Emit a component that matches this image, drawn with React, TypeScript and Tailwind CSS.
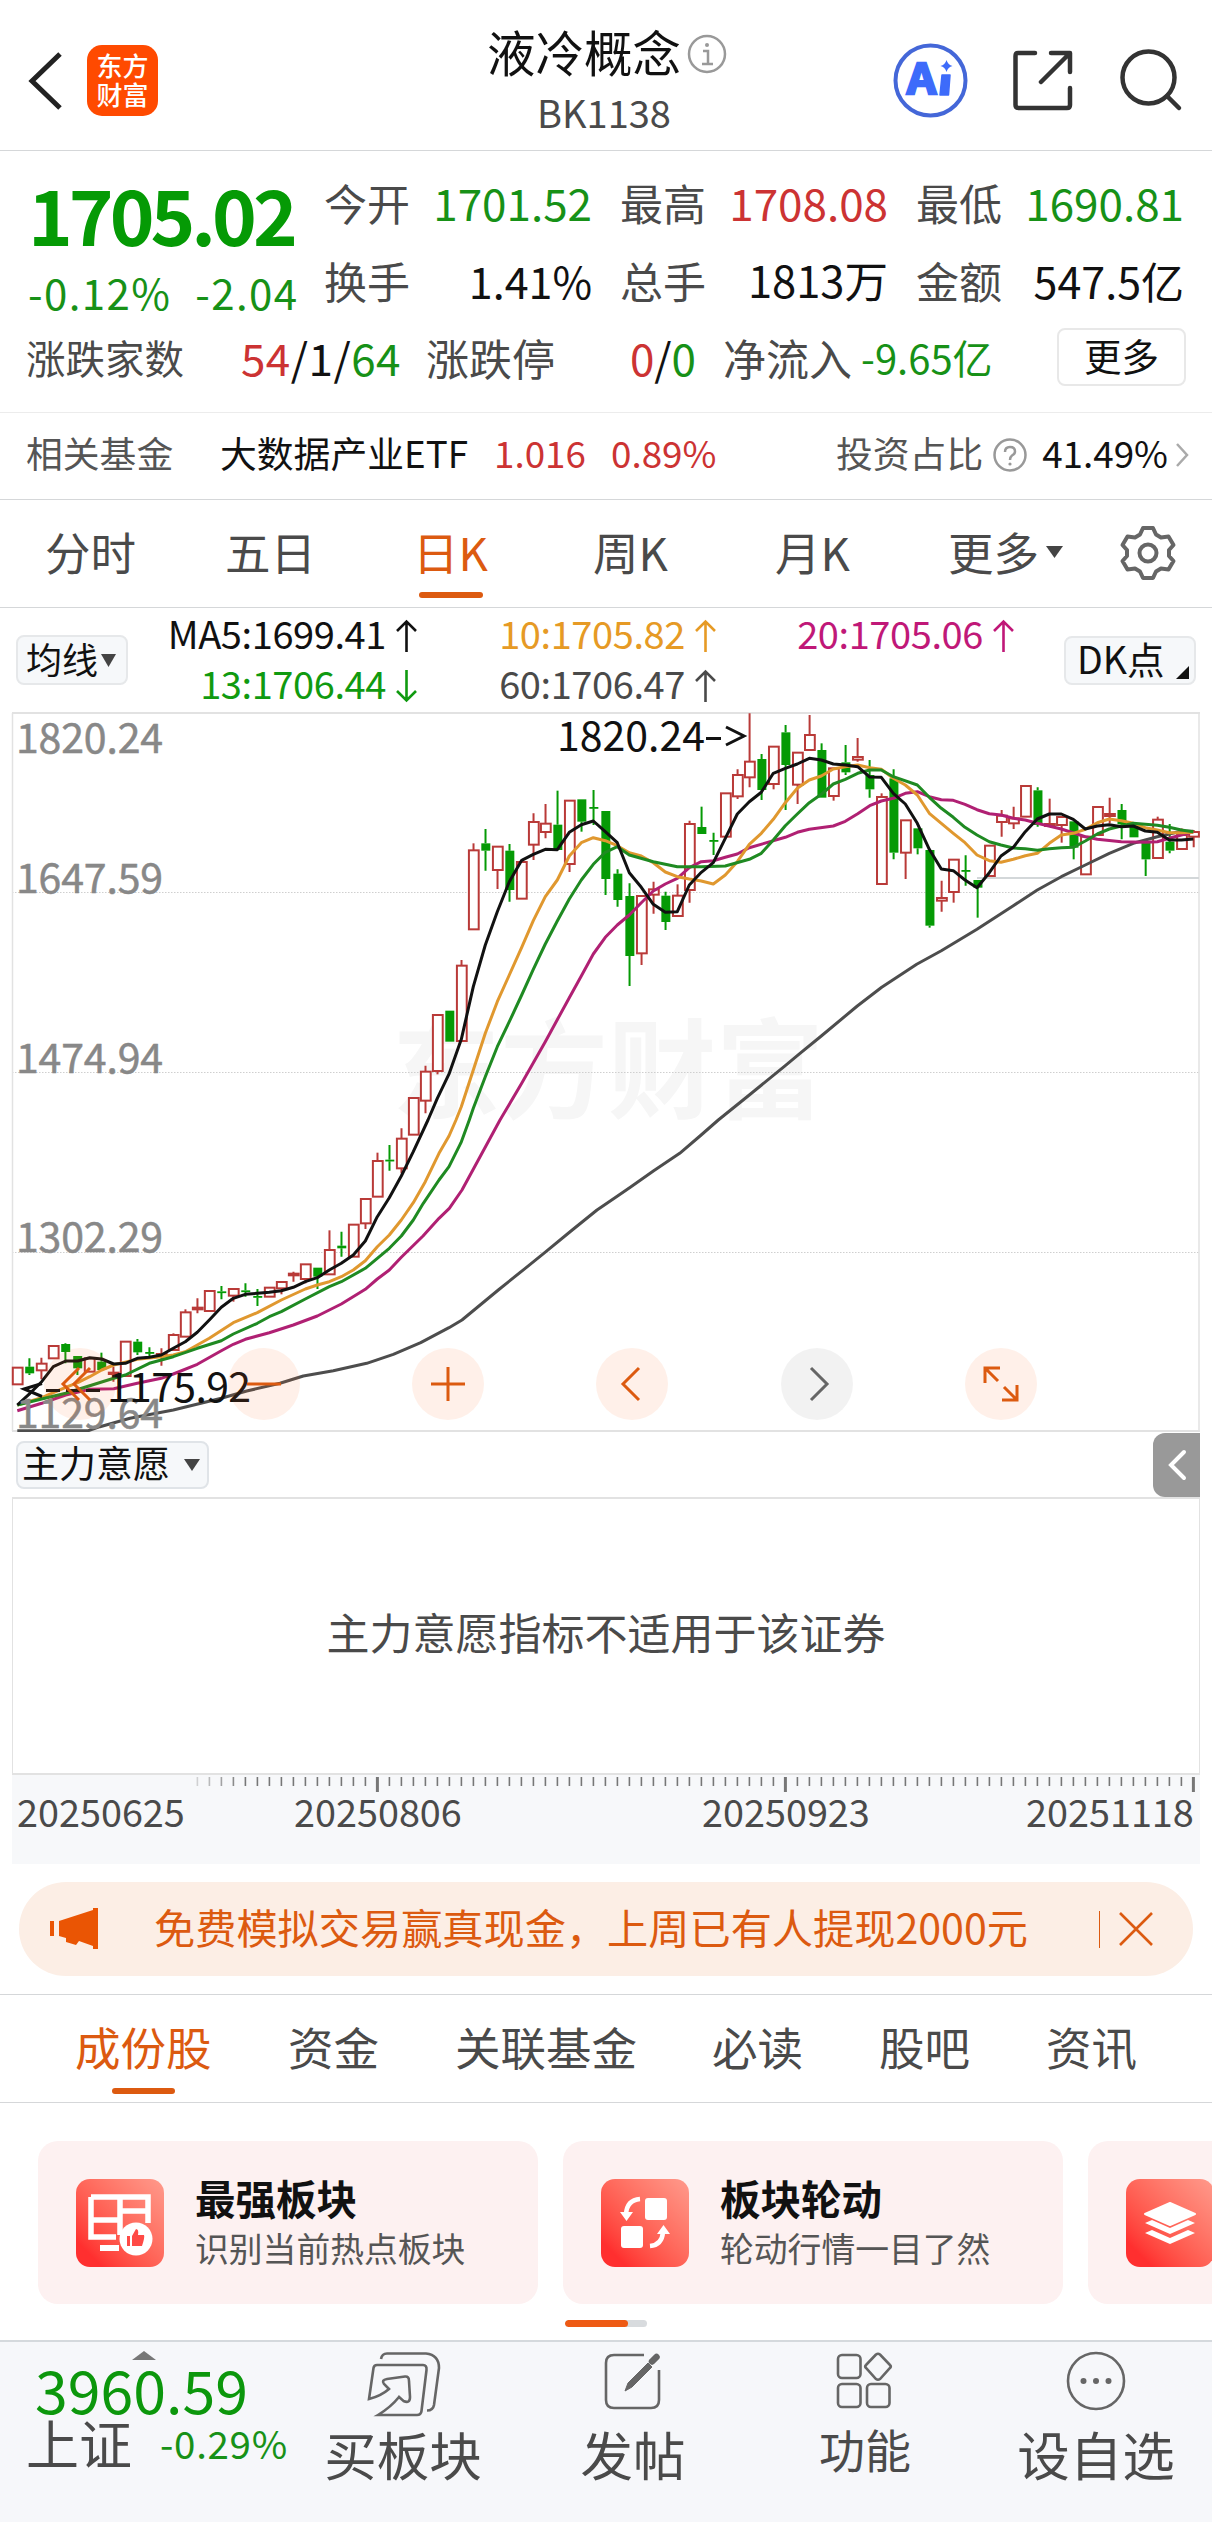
import type { ReactNode } from "react";

const GREEN = "#059a05";
const RED = "#b93a38";

/* One entry per trading day: "R|G bodyTop bodyBottom [wickTop wickBottom]", in thirds of a pixel above `base`. */
const CANDLES: { base: number; days: string[] }[] = [
  {
    base: 1100,
    days: [
      "R 803 853", "G 800 820 775 825", "R 791 811 773 838", "R 738 775", "G 732 756 730 790",
      "G 768 805 768 825", "R 775 815", "G 785 810 758 810", "R 818 822 800 845", "R 725 828",
      "G 725 757 717 765", "G 756 760 742 772", "R 762 767 745 797", "R 705 750 700 750", "R 637 710 628 710",
      "R 623 628 595 640", "R 573 633", "G 574 579 558 598", "R 567 587 567 605", "G 571 576 550 590",
      "G 588 593 567 618", "R 563 590", "R 546 565 546 583", "R 521 526 515 545", "R 493 537 493 550",
      "G 503 530 503 567", "R 450 523 391 523", "G 437 445 395 470", "R 374 470", "R 297 370 297 387",
      "R 183 290 158 290", "G 179 184 135 212", "R 116 205 85 220",
    ],
  },
  {
    base: 700,
    days: [
      "R 1194 1304", "R 1115 1202 1097 1240", "R 945 1113 945 1123", "G 932 1025", "R 797 1023 780 1023",
      "R 451 688 430 688", "G 430 452 387 512", "R 440 510 440 567", "G 452 570 432 605", "R 486 596",
      "R 366 434 340 480", "R 371 396 312 415", "G 374 450 272 450", "R 302 492 302 516", "G 298 365 298 395",
      "G 321 325 270 375", "G 333 537 333 585", "G 521 600 508 620", "G 588 768 550 858", "R 588 760 588 795",
      "R 568 584 545 641", "G 587 666 575 690", "R 587 648 553 648", "R 372 570 362 608", "G 381 402 320 402",
      "G 420 424 398 465", "R 280 410", "R 225 289 208 297", "R 185 232 40 262", "G 177 270 162 300",
      "R 140 252 140 268", "G 97 195 75 330", "R 158 254 158 312", "R 105 150 45 150", "G 150 293 130 293",
      "R 205 288 205 302", "G 187 217 135 225", "R 171 179 114 185", "G 225 268 180 293", "R 291 552 280 552",
      "G 235 458 208 478", "R 361 458 361 537", "G 385 445 385 463", "G 450 677 450 683", "R 594 602 542 635",
      "R 479 576 479 608", "G 510 514 466 557", "G 540 563 540 653", "R 437 528", "R 347 366 330 410",
      "R 355 370 320 387", "R 258 350", "G 271 375 262 380", "R 372 378 296 378", "R 351 375 351 428",
      "G 364 443 364 478", "R 410 523", "R 321 405", "R 342 348 293 370", "G 330 373 312 418",
      "G 375 412", "G 425 478 425 528", "R 359 474 350 474", "G 425 452 372 460", "R 405 447 385 447",
      "R 396 410 390 442",
    ],
  },
];

/* Moving averages as runs of points; each run has its own origin and a scale of three units per pixel. */
type Run = [number, number, string];
const AVERAGES: { color: string; runs: Run[] }[] = [
  {
    color: "#4d4d4d",
    runs: [
      [0, 1100, "52,992 265,992 300,980 390,955 520,930 664,895 740,873 840,850 910,828 1000,812 1100,790 1180,763 1262,728 1347,683 1386,660 1495,570 1572,508 1635,457 1713,393 1791,330 1845,293 1891,262 1961,212 2039,160 2100,108"],
      [400, 700, "955,1260 1048,1185 1156,1097"],
      [800, 700, "0,1060 64,1008 172,918 245,862 350,793 424,752 531,688 640,617 712,570 784,530 856,495 928,460 1000,430 1072,410 1144,394 1180,394"],
    ],
  },
  {
    color: "#b02073",
    runs: [
      [0, 1100, "52,932 125,910 197,885 269,868 341,866 412,850 484,835 520,822 592,793 664,752 700,733 736,718 808,698 880,675 952,648 1024,612 1096,568 1132,537 1168,510 1204,472 1269,408 1317,355 1348,325 1386,270 1435,180"],
      [400, 700, "300,1260 365,1150 436,1025 508,893 544,828 580,762 616,712 652,675 688,645 724,608 760,573 796,552 832,535 868,503 904,485 940,482 976,472 1012,462 1048,443 1156,412 1192,397"],
      [800, 700, "28,388 100,378 136,364 173,341 209,317 244,303 280,295 316,280 352,275 388,290 424,299 460,301 495,313 531,329 568,341 603,345 640,355 676,360 712,370 784,387 856,410 892,418 964,425 1036,427 1072,425 1108,415 1144,405 1180,395"],
    ],
  },
  {
    color: "#e0982f",
    runs: [
      [0, 1100, "52,915 125,893 197,862 233,848 269,830 305,810 341,795 376,787 412,778 484,770 520,765 556,755 628,715 700,668 772,638 844,600 916,567 952,555 988,545 1024,530 1060,510 1096,482 1132,440 1168,405 1204,360 1240,308 1276,245 1317,160 1347,108"],
      [400, 700, "168,1260 184,1220 220,1110 256,1000 292,905 328,825 365,742 400,662 436,590 472,540 508,468 544,428 580,413 616,422 652,437 688,458 724,468 760,488 796,516 832,530 868,537 904,543 940,552 976,525 1012,485 1048,433 1084,400 1120,358 1156,308 1192,265"],
      [800, 700, "28,240 64,228 100,207 136,200 173,195 209,203 244,208 280,235 316,255 352,285 388,340 424,370 460,400 495,428 531,465 568,482 603,487 640,478 676,467 712,460 748,430 784,405 820,400 856,388 892,368 928,357 964,362 1000,370 1036,383 1072,390 1108,398 1144,398 1180,397"],
    ],
  },
  {
    color: "#1f8a22",
    runs: [
      [0, 1100, "52,915 125,897 197,880 269,857 341,835 376,825 448,790 520,770 592,745 664,722 700,702 772,670 808,650 844,635 916,597 988,560 1024,545 1096,505 1132,475 1168,445 1204,408 1240,360 1270,310 1317,240 1347,200 1383,128"],
      [400, 700, "208,1260 220,1225 256,1130 292,1040 328,965 365,885 400,808 436,732 472,663 508,597 544,540 580,493 616,457 652,440 688,465 760,485 832,500 904,500 976,498 1048,478 1084,460 1120,420 1156,377 1192,342 1228,308"],
      [800, 700, "64,283 100,252 136,238 173,220 209,210 244,210 280,230 352,255 388,292 424,325 460,352 495,382 531,405 568,425 603,435 640,444 676,446 712,451 748,446 784,443 820,442 856,423 892,402 928,387 964,378 1000,370 1072,376 1108,382 1144,390 1180,395"],
    ],
  },
  {
    color: "#111111",
    runs: [
      [0, 1100, "52,915 90,880 125,845 160,800 197,783 233,783 269,773 305,777 341,792 376,790 412,775 448,772 484,765 520,745 556,725 592,697 628,660 664,622 700,595 736,583 772,580 808,577 844,572 880,562 916,545 952,533 988,510 1024,490 1060,465 1096,423 1132,350 1168,293 1204,228 1240,155"],
      [400, 700, "84,1260 112,1195 148,1120 184,1018 220,860 256,735 292,635 328,545 365,481 400,463 436,448 472,449 508,397 544,374 580,363 616,395 652,428 688,518 724,562 760,613 796,637 832,635 868,555 904,517 940,488 976,415 1012,342 1048,305 1084,277 1120,220 1156,205 1192,192"],
      [800, 700, "28,175 64,180 100,192 136,195 173,200 209,231 244,232 280,280 316,312 352,370 388,448 424,507 460,512 495,540 531,563 568,518 603,468 640,442 676,395 712,357 748,342 784,342 820,358 856,387 892,378 928,374 964,380 1000,378 1036,393 1072,397 1108,420 1144,420 1180,417"],
    ],
  },
];

const toPoints = (runs: Run[]) =>
  runs
    .flatMap(([ox, oy, pts]) =>
      pts.split(" ").map((p) => {
        const [x, y] = p.split(",").map(Number);
        return `${(ox + x / 3).toFixed(1)},${(oy + y / 3).toFixed(1)}`;
      }),
    )
    .join(" ");

function Candles() {
  let day = -1;
  return (
    <g>
      {CANDLES.flatMap(({ base, days }) =>
        days.map((entry) => {
          day += 1;
          const [kind, ...nums] = entry.split(" ");
          const [t, b, hi = t, lo = b] = nums.map((n) => base + Number(n) / 3);
          const top = t as number;
          const bottom = b as number;
          const x = 17.4 + 12.003 * day;
          const color = kind === "R" ? RED : GREEN;
          return (
            <g key={day}>
              <path d={`M${x} ${hi}V${top}M${x} ${bottom}V${lo}`} stroke={color} strokeWidth={2} />
              {kind === "R" ? (
                <rect x={x - 4.6} y={top} width={9.8} height={Math.max(bottom - top, 0.5)} fill="#fff" stroke={color} strokeWidth={2} />
              ) : (
                <rect x={x - 4.2} y={top} width={9} height={Math.max(bottom - top, 1.8)} fill={color} />
              )}
            </g>
          );
        }),
      )}
    </g>
  );
}

function KLineChart() {
  return (
    <svg className="block h-[720px] w-[1212px]" viewBox="0 712 1212 720" fill="none">
      <text x="392" y="1110" fontSize="108" fontWeight="700" fill="#f6f6f6">东方财富</text>
      <g stroke="#cfcfcf" strokeWidth="1" strokeDasharray="1.5 1.5">
        <path d="M12 892.5H1199M12 1072.5H1199M12 1252.5H1199" />
      </g>
      <path d="M12.5 713V1431M1199 713V1431" stroke="#e2e2e2" strokeWidth="1.5" />
      <path d="M12 713H1200M12 1431H1200" stroke="#e2e2e2" strokeWidth="2" />
      <path d="M977 878H1199" stroke="#d3d7d9" strokeWidth="2" />
      <Candles />
      {AVERAGES.map((a) => (
        <polyline key={a.color} points={toPoints(a.runs)} fill="none" stroke={a.color} strokeWidth="3" strokeLinejoin="round" />
      ))}
      <g fill="#888" stroke="#888" strokeWidth="0.5" fontSize="41">
        <text x="16" y="753" textLength="147">1820.24</text>
        <text x="16" y="893" textLength="147">1647.59</text>
        <text x="16" y="1073" textLength="147">1474.94</text>
        <text x="16" y="1252" textLength="147">1302.29</text>
        <text x="16" y="1428" textLength="147">1129.64</text>
      </g>
      <g fill="#111" fontSize="41">
        <text x="557" y="751" textLength="148">1820.24</text>
        <path d="M706 738.500H721M726 727L744 736L726 745" fill="none" stroke="#111" strokeWidth="3" />
        <text x="107" y="1402" textLength="144">1175.92</text>
        <path d="M42 1383.500L24 1389L42 1396.500M46 1390.500H60M66 1390.500H80M86 1390.500H100" fill="none" stroke="#111" strokeWidth="3" />
      </g>
    </svg>
  );
}

function ChartButton({ children, muted }: { children: ReactNode; muted?: boolean }) {
  return (
    <button className={`flex size-[72px] items-center justify-center rounded-full ${muted ? "bg-black/5" : "bg-[#ff6a20]/10"}`}>
      <svg className="size-[48px]" viewBox="-24 -24 48 48" fill="none" stroke={muted ? "#666" : "#dc5a10"} strokeWidth="3">
        {children}
      </svg>
    </button>
  );
}

function Stat({ label, value, tone }: { label: string; value: string; tone: string }) {
  return (
    <div className="flex w-[268px] items-center justify-between">
      <span className="text-[#4a4a4a]">{label}</span>
      <span className={tone}>{value}</span>
    </div>
  );
}

function Arrow({ down }: { down?: boolean }) {
  return (
    <svg className={`mt-[6px] ml-[10px] h-[34px] w-[21px] ${down ? "rotate-180" : ""}`} viewBox="0 0 21 34" fill="none" stroke="currentColor" strokeWidth="2.6">
      <path d="M10.500 33V3M1 12L10.500 2.500L20 12" />
    </svg>
  );
}

function Average({ text, tone, down }: { text: string; tone: string; down?: boolean }) {
  return (
    <div className={`flex h-[50px] items-center justify-end whitespace-nowrap ${tone}`}>
      {text}
      <Arrow down={down} />
    </div>
  );
}

function FeatureCard({ title, note, children }: { title?: string; note?: string; children: ReactNode }) {
  return (
    <div className="flex h-[163px] w-[500px] shrink-0 items-center rounded-[20px] bg-[#fdf1f1] pl-[38px]">
      <div className="size-[88px] shrink-0 rounded-[14px] bg-linear-to-tr from-[#ff2f2f] from-15% to-[#ff9a8c]">
        <svg viewBox="0 0 88 88" className="size-full" fill="none">{children}</svg>
      </div>
      <div className="ml-[31px] whitespace-nowrap">
        <div className="text-[40.500px] leading-[50px] font-bold text-[#111]">{title}</div>
        <div className="text-[33.800px] leading-[50px] text-[#555]">{note}</div>
      </div>
    </div>
  );
}

const ticks = Array.from({ length: 84 }, (_, i) => 197.4 + i * 12);

export default function App() {
  return (
    <div className="relative w-[1212px] overflow-hidden bg-white leading-none text-[#111] [font-family:'Noto_Sans_CJK_SC',sans-serif]">
      {/* Title bar */}
      <header className="flex h-[151px] items-start border-b border-[#d5d7d9]">
        <svg className="mt-[52px] ml-[26px] h-[58px] w-[38px] shrink-0" viewBox="0 0 38 58" fill="none" stroke="#222" strokeWidth="5">
          <path d="M34 2L6 29L34 56" />
        </svg>
        <div className="mt-[45px] ml-[23px] flex size-[71px] shrink-0 flex-col items-center justify-center rounded-[15px] bg-[#ff4a00] pb-[3px] text-[26px] leading-[29px] font-medium text-white">
          <span>东方</span>
          <span>财富</span>
        </div>
        <div className="ml-[200px] flex w-[502px] shrink-0 flex-col items-center pt-[26px] pr-[10px]">
          <div className="ml-[6px] flex items-center text-[48.500px] leading-[50px]">
            液冷概念
            <svg className="mt-[5px] ml-[6px] size-[40px]" viewBox="-20 -20 40 40" fill="none" stroke="#999" strokeWidth="2.500">
              <circle r="18" />
              <path d="M-4 -3H1V10M-5 10H6" />
              <circle cy="-9" r="2" fill="#999" stroke="none" />
            </svg>
          </div>
          <div className="mt-[17px] text-[38px] leading-[38px] text-[#4a4a4a]">BK1138</div>
        </div>
        <svg className="mt-[20px] h-[120px] w-[352px] shrink-0" viewBox="0 20 352 120" fill="none">
          <circle cx="70.500" cy="80.500" r="35" stroke="#4467d8" strokeWidth="4" />
          <text x="47" y="94" fontSize="42" fontWeight="700" fill="#3d6bfa" stroke="#3d6bfa" strokeWidth="2.500" textLength="29" lengthAdjust="spacingAndGlyphs">A</text>
          <path d="M82 75L90 75L88.500 95L80 95Z" fill="#3d6bfa" stroke="#3d6bfa" strokeWidth="1.500" strokeLinejoin="round" />
          <path d="M86.500 60Q88 65 92.500 66Q88 67 86.500 72Q85 67 80.500 66Q85 65 86.500 60Z" fill="#3d6bfa" />
          <g stroke="#333" strokeWidth="4.500" strokeLinecap="round" strokeLinejoin="round">
            <path d="M175 53H158Q155.500 53 155.500 56V105Q155.500 108 158.500 108H207Q210 108 210 105V88M191 53H210V72M209 54L181 82" />
            <circle cx="288.500" cy="77.500" r="26" />
            <path d="M307 96L319 108" />
          </g>
        </svg>
      </header>

      {/* Quote summary */}
      <section className="h-[262px] border-b border-[#ececec] text-[43px]">
        <div className="flex h-[167px] text-[#179117]">
          <div className="w-[324px] shrink-0 pt-[24px] pl-[28px] whitespace-nowrap">
            <div className="text-[76px] font-bold tracking-[-4px] text-[#059a05]">1705.02</div>
            <div className="mt-[20px] flex gap-[24px] text-[42px] tracking-[1.400px]">
              <span>-0.12%</span>
              <span>-2.04</span>
            </div>
          </div>
          <div className="grid auto-rows-[78px] grid-cols-[268px_268px_268px] gap-x-[28px] pt-[12px]">
            <Stat label="今开" value="1701.52" tone="text-[44px]" />
            <Stat label="最高" value="1708.08" tone="text-[44px] text-[#cc3333]" />
            <Stat label="最低" value="1690.81" tone="text-[44px]" />
            <Stat label="换手" value="1.41%" tone="text-[#111]" />
            <Stat label="总手" value="1813万" tone="text-[#111] text-[43.500px]" />
            <Stat label="金额" value="547.5亿" tone="text-[#111]" />
          </div>
        </div>
        <div className="flex h-[78px] items-center whitespace-nowrap">
          <div className="flex w-[374px] items-center justify-between pl-[26px]">
            <span className="text-[39.500px] text-[#4a4a4a]">涨跌家数</span>
            <span className="mr-[-27px] text-[44px] tracking-[0.500px]"><span className="text-[#cc3333]">54</span>/1/<span className="text-[#179117]">64</span></span>
          </div>
          <div className="ml-[52px] flex w-[270px] items-center justify-between">
            <span className="text-[#4a4a4a]">涨跌停</span>
            <span className="text-[44px]"><span className="text-[#cc3333]">0</span>/<span className="text-[#179117]">0</span></span>
          </div>
          <span className="ml-[27px] text-[#4a4a4a]">净流入</span>
          <span className="ml-[9px] text-[40px] text-[#179117]">-9.65亿</span>
          <button className="mr-[26px] ml-auto h-[58px] w-[129px] rounded-[8px] border-2 border-[#e8e8e8] pb-[4px] text-[37.500px]">更多</button>
        </div>
      </section>

      {/* Related fund */}
      <section className="flex h-[87px] items-center border-b border-[#d5d7d9] pb-[7px] text-[36.800px] whitespace-nowrap">
        <span className="ml-[26px] w-[194px] text-[#555]">相关基金</span>
        <span className="w-[274px]">大数据产业ETF</span>
        <span className="w-[117px] text-[#cc3333]">1.016</span>
        <span className="w-[225px] text-[#cc3333]">0.89%</span>
        <span className="text-[#555]">投资占比</span>
        <svg className="mt-[5px] ml-[9px] size-[36px]" viewBox="-18 -18 36 36" fill="none" stroke="#999" strokeWidth="2.500">
          <circle r="15.500" />
          <path d="M-5 -3Q-5 -8 0 -8Q5 -8 5 -3.500Q5 -1 2 .5Q0 2 0 5" />
          <circle cy="9" r="1.600" fill="#999" stroke="none" />
        </svg>
        <span className="ml-[14px]">41.49%</span>
        <svg className="mt-[4px] ml-[7px] h-[26px] w-[14px]" viewBox="0 0 14 26" fill="none" stroke="#aaa" strokeWidth="2.500"><path d="M2 2L12 13L2 24" /></svg>
      </section>

      {/* Period tabs */}
      <nav className="flex h-[108px] items-center border-b border-[#d5d7d9] pb-[4px] text-[45.500px] whitespace-nowrap text-[#4a4a4a]">
        <span className="ml-[45px] w-[180px]">分时</span>
        <span className="w-[188px]">五日</span>
        <span className="relative w-[180px] text-[#dc5a10]">
          日K
          <i className="absolute top-[63px] left-[6px] h-[6px] w-[64px] rounded-full bg-[#dc5a10]" />
        </span>
        <span className="w-[182px]">周K</span>
        <span className="w-[173px]">月K</span>
        <span>更多</span>
        <svg className="ml-[7px] h-[12px] w-[17px]" viewBox="0 0 17 12"><path d="M0 0H17L8.500 12Z" fill="#444" /></svg>
        <svg className="mt-[3px] ml-[56px] size-[58px]" viewBox="-29 -29 58 58" fill="none" stroke="#666" strokeWidth="4" strokeLinejoin="round">
          <path d="M-5 -25H5L8 -18.500L13 -15.500L20.500 -16.500L25.500 -8L21 -3V3L25.500 8L20.500 16.500L13 15.500L8 18.500L5 25H-5L-8 18.500L-13 15.500L-20.500 16.500L-25.500 8L-21 3V-3L-25.500 -8L-20.500 -16.500L-13 -15.500L-8 -18.500Z" />
          <circle r="8.500" />
        </svg>
      </nav>

      {/* Moving-average legend */}
      <section className="flex h-[104px] items-start">
        <button className="mt-[27px] ml-[16px] flex h-[50px] w-[112px] items-center rounded-[8px] border-2 border-[#e6e8ea] bg-[#f6f8fa] pb-[4px] pl-[8px] text-[36px]">
          均线
          <svg className="mt-[4px] ml-[3px] h-[13px] w-[15px]" viewBox="0 0 15 13"><path d="M0 0H15L7.500 13Z" fill="#444" /></svg>
        </button>
        <div className="grid h-[104px] w-[885px] auto-rows-[50px] grid-cols-[289px_299px_298px] text-[38px] tracking-[-0.400px]">
          <Average text="MA5:1699.41" tone="text-[#111]" />
          <Average text="10:1705.82" tone="text-[#e69a25]" />
          <Average text="20:1705.06" tone="text-[#c01878]" />
          <Average text="13:1706.44" tone="text-[#109a10]" down />
          <Average text="60:1706.47" tone="text-[#4a4a4a]" />
        </div>
        <button className="relative mt-[28px] ml-[51px] flex h-[49px] w-[132px] items-center rounded-[8px] border-2 border-[#e6e8ea] bg-[#f6f8fa] pb-[5px] pl-[11px] text-[37.500px]">
          DK点
          <svg className="absolute right-[5px] bottom-[4px] size-[13px]" viewBox="0 0 13 13"><path d="M13 0V13H0Z" fill="#111" /></svg>
        </button>
      </section>

      {/* Candlestick chart */}
      <section className="relative h-[720px]">
        <KLineChart />
        <div className="absolute top-[636px] left-[43.500px] flex gap-[112.300px]">
          <ChartButton><path d="M-1 -16L-17 0L-1 16M10 -16L-6 0L10 16" /></ChartButton>
          <ChartButton><path d="M-17 0H17" /></ChartButton>
          <ChartButton><path d="M-17 0H17M0 -17V17" /></ChartButton>
          <ChartButton><path d="M7 -16L-9 0L7 16" /></ChartButton>
          <ChartButton muted><path d="M-6 -16L10 0L-6 16" /></ChartButton>
          <ChartButton><path d="M-16 -1V-16H-1M-15 -15L-3 -3M16 1V16H1M15 15L3 3" /></ChartButton>
        </div>
      </section>

      {/* Indicator panel */}
      <section>
        <div className="flex h-[65px] items-center">
          <button className="ml-[16px] flex h-[48px] w-[193px] items-center rounded-[8px] border-2 border-[#e0e4e8] bg-[#f6f8fa] pb-[4px] pl-[4px] text-[37px] whitespace-nowrap">
            主力意愿
            <svg className="mt-[4px] ml-[14px] h-[12px] w-[16px]" viewBox="0 0 16 12"><path d="M0 0H16L8 12Z" fill="#444" /></svg>
          </button>
          <button className="mr-[12px] ml-auto flex h-[64px] w-[47px] items-center justify-center rounded-l-[12px] bg-[#999]">
            <svg className="h-[32px] w-[20px]" viewBox="0 0 20 32" fill="none" stroke="#fff" strokeWidth="4" strokeLinecap="round"><path d="M17 3L4 16L17 29" /></svg>
          </button>
        </div>
        <div className="ml-[12px] flex h-[278px] w-[1188px] items-center justify-center border-2 border-x-[1.500px] border-[#e2e2e2] pb-[10px] text-[43px] text-[#4a4a4a]">
          主力意愿指标不适用于该证券
        </div>
        <div className="ml-[12px] h-[89px] w-[1188px] bg-[#f7f8fa]">
          <svg className="block h-[17px] w-[1188px]" viewBox="12 0 1188 17">
            {ticks.map((x, i) => {
              const major = i === 15 || i === 49 || i === 83;
              return <path key={i} d={`M${x} 2V${major ? 17 : 11}`} stroke="#777" strokeWidth={major ? 3 : 1.6} opacity={i < 4 ? 0.3 + i * 0.18 : 1} />;
            })}
          </svg>
          <div className="flex text-[37.800px] leading-[38px] text-[#4a4a4a]">
            <span className="ml-[5px] w-[277px]">20250625</span>
            <span className="w-[408px]">20250806</span>
            <span className="w-[324px]">20250923</span>
            <span>20251118</span>
          </div>
        </div>
      </section>

      {/* Promotion banner */}
      <section className="h-[131px] border-b border-[#d5d7d9] pt-[18px]">
        <div className="mx-[19px] flex h-[94px] items-center rounded-full bg-[#fceee5] whitespace-nowrap text-[#dc5a10]">
          <svg className="ml-[31px] h-[42px] w-[48px]" viewBox="0 0 48 42" fill="#ea5504">
            <path d="M0 13H4V28H0ZM9 13L43 2V0H48V41H43V38L29 33L26 37L16 34V30L9 28Z" />
          </svg>
          <span className="ml-[56px] pb-[5px] text-[41.200px]">免费模拟交易赢真现金，上周已有人提现2000元</span>
          <i className="ml-auto h-[37px] w-px bg-[#dc5a10]" />
          <svg className="mr-[40px] ml-[19px] size-[34px]" viewBox="0 0 34 34" stroke="currentColor" strokeWidth="2.600"><path d="M1 1L33 33M33 1L1 33" /></svg>
        </div>
      </section>

      {/* Content tabs */}
      <nav className="flex h-[108px] items-center border-b border-[#d5d7d9] pb-[4px] text-[45.500px] whitespace-nowrap text-[#4a4a4a]">
        <span className="relative ml-[75px] w-[213px] text-[#dc5a10]">
          成份股
          <i className="absolute top-[64px] left-[37px] h-[6px] w-[63px] rounded-full bg-[#dc5a10]" />
        </span>
        <span className="w-[167px]">资金</span>
        <span className="w-[257px]">关联基金</span>
        <span className="w-[167px]">必读</span>
        <span className="w-[167px]">股吧</span>
        <span>资讯</span>
      </nav>

      {/* Feature cards */}
      <section className="h-[237px] overflow-hidden pt-[38px]">
        <div className="ml-[38px] flex gap-[25px]">
          <FeatureCard title="最强板块" note="识别当前热点板块">
            <path d="M15 18H72V44M15 18V58H40M15 41H44M44 18V56M44 32H72" stroke="#fff" strokeWidth="5.500" />
            <path d="M24 69H43" stroke="#fff" strokeWidth="6" />
            <circle cx="60" cy="60" r="16.500" fill="#fff" />
            <path d="M51 57H54V67H51ZM56 57L60 50Q63 50 62 56H68Q69 58 66 67H56Z" fill="#ff4a46" />
          </FeatureCard>
          <FeatureCard title="板块轮动" note="轮动行情一目了然">
            <rect x="44" y="19" width="22" height="22" rx="3" fill="#fff" />
            <rect x="20" y="47" width="22" height="22" rx="3" fill="#fff" />
            <path d="M39 20Q26 21 25 35" stroke="#fff" strokeWidth="4.500" />
            <path d="M19 33H32L25.500 42ZM56 55H69L62.500 46Z" fill="#fff" />
            <path d="M49 67Q61 66 62 53" stroke="#fff" strokeWidth="4.500" />
          </FeatureCard>
          <FeatureCard>
            <path d="M44 24L69 35L44 46L19 35Z" fill="#fff" stroke="#fff" strokeLinejoin="round" strokeWidth="2" />
            <path d="M19 44L26 41L44 49L62 41L69 44L44 55ZM19 54L26 51L44 59L62 51L69 54L44 65Z" fill="#fff" />
          </FeatureCard>
        </div>
        <div className="mx-auto mt-[16px] h-[7px] w-[82px] overflow-hidden rounded-full bg-[#d8dbde]">
          <div className="h-full w-[63px] rounded-full bg-[#ee5a14]" />
        </div>
      </section>

      {/* Bottom bar */}
      <footer className="flex h-[183px] items-start border-t-2 border-[#d5d9dd] bg-[#f6f7fa] whitespace-nowrap text-[#4a4a4a]">
        <div className="w-[324px] shrink-0">
          <svg className="mt-[9px] ml-[132px] block h-[9px] w-[24px]" viewBox="0 0 24 9"><path d="M12 0L24 9H0Z" fill="#777" /></svg>
          <div className="-mt-[1px] ml-[35px] text-[59px] leading-[60px] text-[#0c970c]">3960.59</div>
          <div className="-mt-[5px] flex items-center">
            <span className="ml-[26px] text-[53px] leading-[56px]">上证</span>
            <span className="ml-[28px] text-[38.500px] leading-[38px] tracking-[0.700px] text-[#179117]">-0.29%</span>
          </div>
        </div>
        <div className="flex w-[158px] flex-col items-center text-[52.500px]">
          <svg className="mt-[5px] h-[72px] w-[80px]" viewBox="22 10 80 72" fill="none" stroke="#666" strokeWidth="2.600">
            <path d="M40 22Q41 16.500 46 16.500H85Q98 18 98 31L93 68Q92 73.500 86 73.500" />
            <path d="M28 62L32.500 31Q33 28 36 28H82Q86 28 85.500 33L80.500 74Q80 78 76 78H37Q50 70 58 60L62.500 64Q69 67 69 60L68 44Q68 39 64 39.500L46 42Q40 43 43 47L48 52Q40 59 28 62Z" />
          </svg>
          <span className="mt-[8px]">买板块</span>
        </div>
        <div className="ml-[98px] flex w-[106px] flex-col items-center text-[52.500px]">
          <svg className="mt-[4px] h-[72px] w-[64px]" viewBox="0 0 64 72" fill="none" stroke="#666" strokeWidth="2.600">
            <path d="M43 9H13Q5 9 5 17V54Q5 62 13 62H50Q58 62 58 54V24" />
            <path d="M24 45L27 37L47 17L51 21L31 41Z" fill="#666" stroke="#666" strokeWidth="1" />
            <path d="M51 15.500L55.500 11" strokeWidth="6.500" strokeLinecap="round" />
          </svg>
          <span className="mt-[9px]">发帖</span>
        </div>
        <div className="ml-[132px] flex w-[94px] flex-col items-center text-[46px]">
          <svg className="mt-[4px] h-[72px] w-[64px]" viewBox="0 0 64 72" fill="none" stroke="#666" strokeWidth="2.600">
            <rect x="5" y="9" width="22.500" height="23" rx="4" />
            <rect x="5" y="38" width="22.500" height="23" rx="4" />
            <rect x="34" y="38" width="22.500" height="23" rx="4" />
            <path d="M43 8.500L33 19Q31.500 20.500 33 22L43 33Q45 34.500 47 33L57 22Q58.500 20.500 57 19L47 8.500Q45 7 43 8.500Z" />
          </svg>
          <span className="mt-[7px]">功能</span>
        </div>
        <div className="ml-[105px] flex w-[158px] flex-col items-center text-[52.500px]">
          <svg className="mt-[4px] h-[72px] w-[64px]" viewBox="0 0 64 72" fill="none" stroke="#666" strokeWidth="2.600">
            <circle cx="32" cy="35" r="28" />
            <g fill="#666" stroke="none">
              <circle cx="19.500" cy="35" r="3" />
              <circle cx="32" cy="35" r="3" />
              <circle cx="44.500" cy="35" r="3" />
            </g>
          </svg>
          <span className="mt-[9px]">设自选</span>
        </div>
      </footer>
    </div>
  );
}
